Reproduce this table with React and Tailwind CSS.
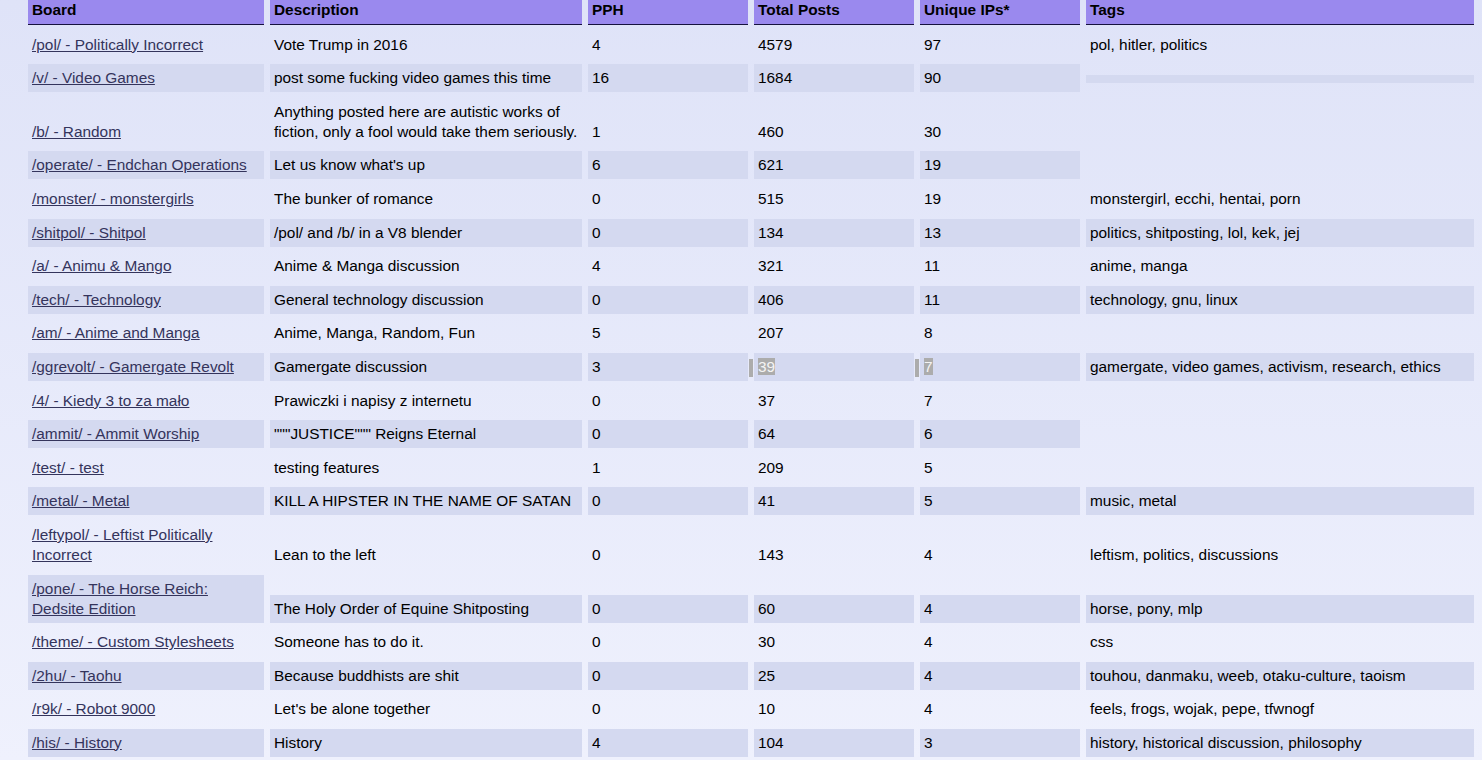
import React from "react";

const rows = [
  { b: ["/pol/ - Politically Incorrect"], d: ["Vote Trump in 2016"], p: "4", t: "4579", u: "97", g: "pol, hitler, politics" },
  { b: ["/v/ - Video Games"], d: ["post some fucking video games this time"], p: "16", t: "1684", u: "90", g: "" },
  { b: ["/b/ - Random"], d: ["Anything posted here are autistic works of", "fiction, only a fool would take them seriously."], p: "1", t: "460", u: "30", g: null },
  { b: ["/operate/ - Endchan Operations"], d: ["Let us know what's up"], p: "6", t: "621", u: "19", g: null },
  { b: ["/monster/ - monstergirls"], d: ["The bunker of romance"], p: "0", t: "515", u: "19", g: "monstergirl, ecchi, hentai, porn" },
  { b: ["/shitpol/ - Shitpol"], d: ["/pol/ and /b/ in a V8 blender"], p: "0", t: "134", u: "13", g: "politics, shitposting, lol, kek, jej" },
  { b: ["/a/ - Animu & Mango"], d: ["Anime & Manga discussion"], p: "4", t: "321", u: "11", g: "anime, manga" },
  { b: ["/tech/ - Technology"], d: ["General technology discussion"], p: "0", t: "406", u: "11", g: "technology, gnu, linux" },
  { b: ["/am/ - Anime and Manga"], d: ["Anime, Manga, Random, Fun"], p: "5", t: "207", u: "8", g: null },
  { b: ["/ggrevolt/ - Gamergate Revolt"], d: ["Gamergate discussion"], p: "3", t: "39", u: "7", g: "gamergate, video games, activism, research, ethics", sel: true },
  { b: ["/4/ - Kiedy 3 to za mało"], d: ["Prawiczki i napisy z internetu"], p: "0", t: "37", u: "7", g: null },
  { b: ["/ammit/ - Ammit Worship"], d: ['"""JUSTICE""" Reigns Eternal'], p: "0", t: "64", u: "6", g: null },
  { b: ["/test/ - test"], d: ["testing features"], p: "1", t: "209", u: "5", g: null },
  { b: ["/metal/ - Metal"], d: ["KILL A HIPSTER IN THE NAME OF SATAN"], p: "0", t: "41", u: "5", g: "music, metal" },
  { b: ["/leftypol/ - Leftist Politically", "Incorrect"], d: ["Lean to the left"], p: "0", t: "143", u: "4", g: "leftism, politics, discussions" },
  { b: ["/pone/ - The Horse Reich:", "Dedsite Edition"], d: ["The Holy Order of Equine Shitposting"], p: "0", t: "60", u: "4", g: "horse, pony, mlp" },
  { b: ["/theme/ - Custom Stylesheets"], d: ["Someone has to do it."], p: "0", t: "30", u: "4", g: "css" },
  { b: ["/2hu/ - Taohu"], d: ["Because buddhists are shit"], p: "0", t: "25", u: "4", g: "touhou, danmaku, weeb, otaku-culture, taoism" },
  { b: ["/r9k/ - Robot 9000"], d: ["Let's be alone together"], p: "0", t: "10", u: "4", g: "feels, frogs, wojak, pepe, tfwnogf" },
  { b: ["/his/ - History"], d: ["History"], p: "4", t: "104", u: "3", g: "history, historical discussion, philosophy" },
];

function Lines({ lines }) {
  return lines.map((l, i) => (
    <React.Fragment key={i}>
      {i > 0 && <br />}
      {l}
    </React.Fragment>
  ));
}

function Sel({ children }) {
  return (
    <>
      <span className="absolute left-[-5px] top-[5.8px] h-[18.7px] w-[3.7px] bg-[#acacac]" />
      <span className="bg-[#acacac] text-[#f4f4f4]">{children}</span>
    </>
  );
}

export default function App() {
  const head = [
    ["Board", "w-[236px]"],
    ["Description", "w-[312px]"],
    ["PPH", "w-[160px]"],
    ["Total Posts", "w-[160px]"],
    ["Unique IPs*", "w-[160px]"],
    ["Tags", "w-[388px]"],
  ];
  return (
    <div className="min-h-[760px] bg-linear-to-b from-[#dfe3f8] to-[#eff1fd] pl-[28px] text-[15.4px] leading-[20px] text-black [font-family:'Liberation_Sans',Arial,sans-serif]">
      <div className="flex flex-col gap-y-[5.6px]">
        <div className="flex gap-x-[6px]">
          {head.map(([h, w]) => (
            <div key={h} className={`${w} shrink-0 border-b border-[#16123e] bg-[#9a89ee] px-[4px] pb-[4px] font-bold`}>
              {h}
            </div>
          ))}
        </div>
        {rows.map((r, i) => {
          const odd = i % 2 === 1;
          const bg = odd ? "bg-[#d4d9f0]" : "";
          return (
            <div key={i} className="flex items-end gap-x-[6px]">
              <div className={`w-[236px] shrink-0 px-[4px] py-[4px] ${bg}`}>
                <a href="#" className="text-[#34345c] underline">
                  <Lines lines={r.b} />
                </a>
              </div>
              <div className={`w-[312px] shrink-0 px-[4px] py-[4px] ${bg}`}>
                <Lines lines={r.d} />
              </div>
              <div className={`w-[160px] shrink-0 px-[4px] py-[4px] ${bg}`}>{r.p}</div>
              <div className={`relative w-[160px] shrink-0 px-[4px] py-[4px] ${bg}`}>
                {r.sel ? <Sel>{r.t}</Sel> : r.t}
              </div>
              <div className={`relative w-[160px] shrink-0 px-[4px] py-[4px] ${bg}`}>
                {r.sel ? <Sel>{r.u}</Sel> : r.u}
              </div>
              {r.g === "" && (
                <div className={`mb-[9.5px] h-[7.7px] w-[388px] shrink-0 ${bg}`} />
              )}
              {r.g && (
                <div className={`w-[388px] shrink-0 px-[4px] py-[4px] ${bg}`}>{r.g}</div>
              )}
            </div>
          );
        })}
      </div>
    </div>
  );
}
